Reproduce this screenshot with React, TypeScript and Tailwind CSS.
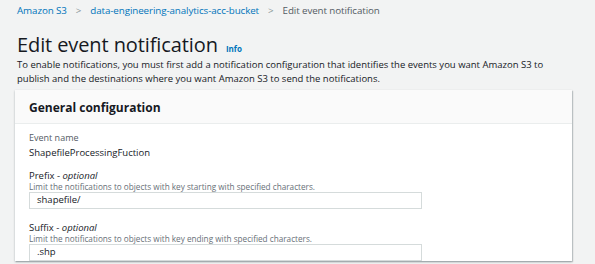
export default function App() {
  return (
    <div className="w-[595px] h-[264px] overflow-hidden bg-[#f2f3f3] text-[#16191f]" style={{ fontFamily: '"Open Sans", "Noto Sans", sans-serif' }}>
      <div className="pl-[17px] pr-[23px] pt-[4px]">
        {/* breadcrumbs */}
        <nav className="flex items-center h-[14px] text-[9.8px] tracking-[-0.1px]">
          <span className="text-[#0073bb]">Amazon S3</span>
          <span className="mx-[9px] text-[#879596]">&gt;</span>
          <span className="text-[#0073bb]">data-engineering-analytics-acc-bucket</span>
          <span className="mx-[9px] text-[#879596]">&gt;</span>
          <span className="text-[#545b64]">Edit event notification</span>
        </nav>

        {/* header */}
        <div className="flex items-baseline gap-[8px] mt-[17px]">
          <h1 className="text-[20px] leading-[20px] font-normal tracking-[-0.1px]">Edit event notification</h1>
          <span className="text-[#0073bb] text-[8px] font-bold">Info</span>
        </div>
        <p className="mt-[3px] text-[9.5px] leading-[14px]">
          To enable notifications, you must first add a notification configuration that identifies the events you want Amazon S3 to
          publish and the destinations where you want Amazon S3 to send the notifications.
        </p>

        {/* card */}
        <div className="mt-[4px] -ml-[2px] w-[557px] bg-white shadow-[0_1px_2px_rgba(0,28,36,0.3),1px_1px_1px_rgba(0,28,36,0.15)]">
          <div className="h-[34px] flex items-center px-[14px] pt-[3px] bg-[#fafafa] border-b border-[#eaeded]">
            <h2 className="text-[12px] font-bold">General configuration</h2>
          </div>
          <div className="px-[14px] pt-[7px]">
            <div className="text-[9px] leading-[13px] text-[#545b64]">Event name</div>
            <div className="mt-[2px] text-[9.5px] leading-[13px]">ShapefileProcessingFuction</div>

            <div className="mt-[11px] text-[9.5px] leading-[11px]">
              Prefix - <i>optional</i>
            </div>
            <div className="mt-[1px] text-[8.2px] leading-[9px] text-[#687078]">
              Limit the notifications to objects with key starting with specified characters.
            </div>
            <div className="mt-[1px] w-[393px] h-[17px] border border-[#d5dbdb] flex items-center px-[7px] text-[9.5px]">
              shapefile/
            </div>

            <div className="mt-[13px] text-[9.5px] leading-[11px]">
              Suffix - <i>optional</i>
            </div>
            <div className="mt-[1px] text-[8.2px] leading-[9px] text-[#687078]">
              Limit the notifications to objects with key ending with specified characters.
            </div>
            <div className="mt-[1px] w-[393px] h-[17px] border border-[#d5dbdb] flex items-center px-[7px] text-[9.5px]">
              .shp
            </div>
          </div>
        </div>
      </div>
    </div>
  )
}
